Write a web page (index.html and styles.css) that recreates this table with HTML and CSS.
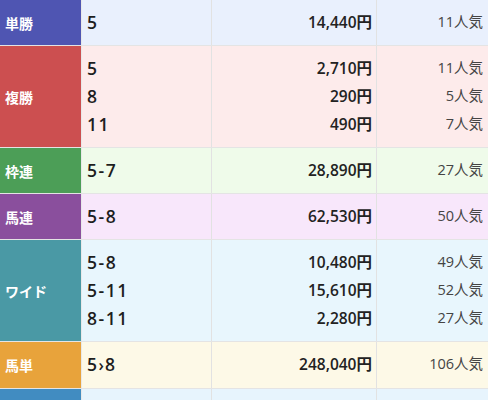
FILE: index.html
```html
<!DOCTYPE html>
<html lang="ja">
<head>
<meta charset="utf-8">
<link rel="stylesheet" href="styles.css">
</head>
<body>
<div class="payout">
  <div class="row tansho">
    <div class="label">単勝</div>
    <div class="cell combo"><div>5</div></div>
    <div class="cell yen"><div>14,440円</div></div>
    <div class="cell pop"><div>11人気</div></div>
  </div>
  <div class="row fukusho">
    <div class="label">複勝</div>
    <div class="cell combo"><div>5</div><div>8</div><div>11</div></div>
    <div class="cell yen"><div>2,710円</div><div>290円</div><div>490円</div></div>
    <div class="cell pop"><div>11人気</div><div>5人気</div><div>7人気</div></div>
  </div>
  <div class="row wakuren">
    <div class="label">枠連</div>
    <div class="cell combo"><div>5-7</div></div>
    <div class="cell yen"><div>28,890円</div></div>
    <div class="cell pop"><div>27人気</div></div>
  </div>
  <div class="row umaren">
    <div class="label">馬連</div>
    <div class="cell combo"><div>5-8</div></div>
    <div class="cell yen"><div>62,530円</div></div>
    <div class="cell pop"><div>50人気</div></div>
  </div>
  <div class="row wide">
    <div class="label">ワイド</div>
    <div class="cell combo"><div>5-8</div><div>5-11</div><div>8-11</div></div>
    <div class="cell yen"><div>10,480円</div><div>15,610円</div><div>2,280円</div></div>
    <div class="cell pop"><div>49人気</div><div>52人気</div><div>27人気</div></div>
  </div>
  <div class="row umatan">
    <div class="label">馬単</div>
    <div class="cell combo"><div>5<span class="arrow">›</span>8</div></div>
    <div class="cell yen"><div>248,040円</div></div>
    <div class="cell pop"><div>106人気</div></div>
  </div>
  <div class="row sanfuku">
    <div class="label"></div>
    <div class="cell combo"></div>
    <div class="cell yen"></div>
    <div class="cell pop"></div>
  </div>
</div>
</body>
</html>
```
FILE: styles.css
```css
html, body {
  margin: 0;
  padding: 0;
  background: #ffffff;
}
body {
  width: 488px;
  height: 400px;
  overflow: hidden;
  font-family: "Open Sans", "Noto Sans CJK JP", sans-serif;
  color: #222;
}
.payout {
  display: flex;
  flex-direction: column;
}
.row {
  display: grid;
  grid-template-columns: 82px 130px 165px 1fr;
  border-bottom: 1px solid #e4e4e4;
}
.label {
  display: flex;
  align-items: center;
  padding-left: 5px;
  color: #fff;
  font-family: "Noto Sans CJK JP", sans-serif;
  font-weight: 700;
  font-size: 14px;
  border-right: 1px solid #e8e8e8;
}
.cell {
  padding: 8px 0 9px;
  line-height: 28px;
  min-height: 28px;
  border-right: 1px solid #e2e2e2;
}
.cell:last-child {
  border-right: none;
}
.combo {
  padding-left: 5px;
  font-size: 17.5px;
  font-weight: 600;
  letter-spacing: 1.5px;
  color: #1e1e1e;
}
.arrow {
  font-size: 16px;
  letter-spacing: 1px;
}
.yen {
  text-align: right;
  padding-right: 4px;
  font-size: 15.5px;
  font-weight: 600;
  color: #222;
}
.pop {
  text-align: right;
  padding-right: 5px;
  font-size: 14.5px;
  color: #444;
}
.tansho .label { background: #4f55b2; }
.tansho .cell { background: #e9f0fd; }
.fukusho .label { background: #cc4f50; }
.fukusho .cell { background: #fdebeb; }
.wakuren .label { background: #4c9e57; }
.wakuren .cell { background: #effbea; }
.umaren .label { background: #8a4f9d; }
.umaren .cell { background: #f8e7fb; }
.wide .label { background: #4a99a5; }
.wide .cell { background: #e8f6fd; }
.umatan .label { background: #e8a33b; }
.umatan .cell { background: #fdf9e7; }
.sanfuku .label { background: #418cc1; }
.sanfuku .cell { background: #e7f4fd; }
```
